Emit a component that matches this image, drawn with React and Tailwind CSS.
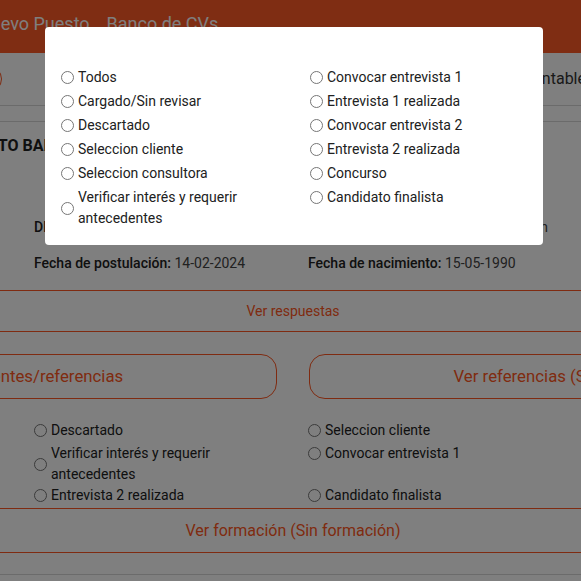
import React from 'react';

const ORANGE = 'border-[#ff5722]';

const leftStates = [
  'Todos',
  'Cargado/Sin revisar',
  'Descartado',
  'Seleccion cliente',
  'Seleccion consultora',
  'Verificar interés y requerir antecedentes',
];

const rightStates = [
  'Convocar entrevista 1',
  'Entrevista 1 realizada',
  'Convocar entrevista 2',
  'Entrevista 2 realizada',
  'Concurso',
  'Candidato finalista',
];

// estados del candidato, en el orden en que aparecen en la ficha
const cardStates = [
  'Todos',
  'Descartado',
  'Seleccion cliente',
  'Seleccion consultora',
  'Cargado/Sin revisar',
  'Verificar interés y requerir antecedentes',
  'Convocar entrevista 1',
  'Entrevista 1 realizada',
  'Convocar entrevista 2',
  'Entrevista 2 realizada',
  'Candidato finalista',
  'Concurso',
];

const Radio = ({ label }) => (
  <label className="flex items-center gap-1 text-[14px] leading-[21px] text-[#212121]">
    <span className="h-[13px] w-[13px] shrink-0 rounded-full border border-[#767676] bg-white"></span>
    <span>{label}</span>
  </label>
);

const Info = ({ label, value, className = '' }) => (
  <div className={`whitespace-nowrap text-[14px] leading-[20px] text-[#424242] ${className}`}>
    {label && <span className="font-medium text-[#212121]">{label}</span>} {value}
  </div>
);

export default function App() {
  return (
    <div className="relative h-[581px] w-[581px] overflow-hidden bg-white font-['Roboto',sans-serif]">
      <div className="ml-[-251px] w-[1088px]">
        {/* Header */}
        <header className="h-[53px] bg-[#ff5a26]">
          <nav className="flex gap-[17px] pl-[229px] pt-[13px] text-[18px] leading-[22px] text-white">
            <span>Nuevo Puesto</span>
            <span>Banco de CVs</span>
          </nav>
        </header>

        {/* Toolbar */}
        <div className="flex h-[53px] items-center border-b border-[#d6d6d6]">
          <button className={`ml-[133px] h-[28px] w-[120px] rounded-full border ${ORANGE} text-[14px] text-[#ff5722]`}>
            Volver
          </button>
          <span className="ml-auto mr-[251px] text-[16px] text-[#333]">Área Contable</span>
        </div>
        <div className="h-[16px] border-b border-[#d6d6d6]"></div>

        {/* Ficha */}
        <div className="pl-[209px] pt-[12px] text-[16px] font-bold leading-[24px] text-[#212121]">
          PUESTO BANCARIO
        </div>

        <div className="mt-[23px] grid grid-cols-4 gap-x-[30px] gap-y-[16px] px-[11px]">
          <Info label="Nombre:" value="Juan" />
          <Info label="" value="" />
          <Info label="Email:" value="juan.perez@gmail.com" />
          <Info label="Teléfono:" value="1123456789" />
          <Info label="Apellido:" value="Pérez" />
          <Info label="DNI:" value="32.456.789" />
          <Info label="Domicilio:" value="Av. San Martín 1234, Junín" className="pr-[4px] text-right" />
          <Info label="CV:" value="Ver" />
          <Info label="Puesto:" value="Banco" />
          <Info label="Fecha de postulación:" value="14-02-2024" />
          <Info label="Fecha de nacimiento:" value="15-05-1990" />
          <Info label="Edad:" value="33" />
        </div>

        <button className={`mt-[17px] h-[42px] w-full rounded-[12px] border ${ORANGE} text-[14px] text-[#ff5722]`}>
          Ver respuestas
        </button>

        <div className="mt-[22px] grid grid-cols-2 gap-8">
          <button className={`h-[45px] rounded-[16px] border ${ORANGE} text-[16.8px] text-[#ff5722]`}>
            Ver antecedentes/referencias
          </button>
          <button className={`h-[45px] rounded-[16px] border ${ORANGE} text-[16.8px] text-[#ff5722]`}>
            Ver referencias (Sin referencias)
          </button>
        </div>

        <div className="mt-[21px] grid grid-cols-4 items-start gap-x-[30px] px-[11px]">
          {cardStates.map(s => (
            <div key={s} className="min-h-[23px]">
              <Radio label={s} />
            </div>
          ))}
        </div>

        <button className={`h-[45px] w-full rounded-[12px] border ${ORANGE} text-[16px] text-[#ff5722]`}>
          Ver formación (Sin formación)
        </button>

        <div className="mt-[21px] border-b border-[#d6d6d6]"></div>
      </div>

      {/* Modal filtro de estados */}
      <div className="absolute inset-0 bg-black/50"></div>
      <div className="absolute left-[45px] top-[27px] grid w-[498px] grid-cols-2 rounded bg-white pb-[16px] pt-[40px]">
        <div className="flex flex-col gap-[3px] pl-4 pr-4">
          {leftStates.map(s => <Radio key={s} label={s} />)}
        </div>
        <div className="flex flex-col gap-[3px] pl-4 pr-4">
          {rightStates.map(s => <Radio key={s} label={s} />)}
        </div>
      </div>
    </div>
  );
}
